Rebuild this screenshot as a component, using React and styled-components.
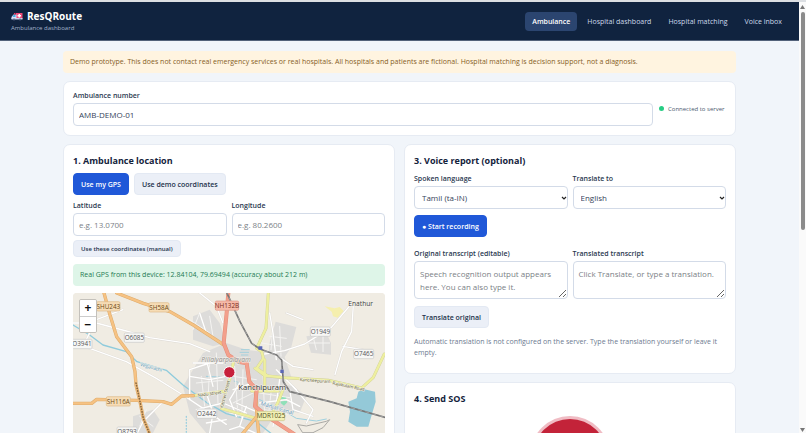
import React from 'react';
import styled, { createGlobalStyle, css } from 'styled-components';

const GlobalStyle = createGlobalStyle`
  *, *::before, *::after { box-sizing: border-box; }
  body {
    margin: 0;
    background: #f1f5fa;
    color: #14233c;
    font-family: "Open Sans", "Noto Sans", sans-serif;
    font-size: 7px;
    line-height: 10px;
  }
  button, input, select, textarea { font-family: inherit; margin: 0; }
  h1, h2, p { margin: 0; }
`;

const Shell = styled.div`
  display: flex;
  height: 100vh;
  overflow: hidden;
  border-top: 2px solid #dcdfe3;
`;

const Page = styled.div`
  flex: 1;
  min-width: 0;
`;

const ScrollTrack = styled.div`
  width: 7px;
  flex: none;
  display: flex;
  flex-direction: column;
  align-items: center;
  justify-content: space-between;
  gap: 3px;
  padding: 3px 0 1px;
  background: #fafafa;
`;

const ScrollThumb = styled.div`
  width: 4px;
  height: 51%;
  margin-bottom: auto;
  border-radius: 2px;
  background: #8b8b8b;
`;

const Header = styled.header`
  display: flex;
  align-items: center;
  justify-content: space-between;
  height: 39px;
  padding: 1px 10px 0 11px;
  background: #10233f;
  border-bottom: 1px solid #53627a;
`;

const Brand = styled.div`
  display: flex;
  flex-direction: column;
  gap: 1px;
`;

const BrandName = styled.h1`
  display: flex;
  align-items: center;
  gap: 4px;
  font-size: 10px;
  line-height: 13px;
  font-weight: 700;
  color: #fff;
`;

const BrandSub = styled.p`
  font-size: 6px;
  line-height: 9px;
  color: #a3b3cc;
`;

const Nav = styled.nav`
  display: flex;
  gap: 3px;
`;

const NavLink = styled.a`
  padding: 4px 7px;
  border-radius: 4px;
  line-height: 11px;
  text-decoration: none;
  color: ${(p) => (p.$active ? '#fff' : '#cdd9eb')};
  font-weight: ${(p) => (p.$active ? 600 : 400)};
  background: ${(p) => (p.$active ? '#2b4570' : 'transparent')};
`;

const Main = styled.main`
  display: flex;
  flex-direction: column;
  gap: 8px;
  max-width: 673px;
  margin: 0 auto;
  padding-top: 10px;
`;

const Notice = styled.p`
  padding: 6px 7px;
  border-radius: 4px;
  background: #fff4e0;
  color: #86601f;
`;

const Card = styled.section`
  padding: 9px;
  border: 1px solid #e6ebf3;
  border-radius: 7px;
  background: #fff;
`;

const TopCard = styled(Card)`
  display: flex;
  align-items: center;
  gap: 6px;
`;

const VoiceCard = styled(Card)`
  padding-bottom: 15px;
`;

const Columns = styled.div`
  display: grid;
  grid-template-columns: 1fr 1fr;
  align-items: start;
  gap: 9px;
`;

const Column = styled.div`
  display: flex;
  flex-direction: column;
  gap: 8px;
`;

const CardTitle = styled.h2`
  font-size: 9px;
  line-height: 14px;
  font-weight: 700;
`;

const Field = styled.div`
  display: flex;
  flex-direction: column;
  flex: 1;
  gap: 2px;
  min-width: 0;
`;

const FieldLabel = styled.label`
  font-weight: 600;
  line-height: 10px;
  color: #2a3850;
`;

const controlStyle = css`
  width: 100%;
  border: 1px solid #d3dbe8;
  border-radius: 4px;
  background: #fff;
  color: #36435a;
  font-size: 8px;
  &::placeholder { color: #7b7f86; opacity: 1; }
`;

const TextInput = styled.input`
  ${controlStyle}
  height: 23px;
  padding: 0 5px;
`;

const SelectBox = styled.select`
  ${controlStyle}
  height: 23px;
  padding: 0 7px;
  appearance: none;
`;

const SelectWrap = styled.div`
  position: relative;
  svg {
    position: absolute;
    right: 1px;
    top: 9px;
    pointer-events: none;
  }
`;

const TextArea = styled.textarea`
  ${controlStyle}
  display: block;
  height: 38px;
  padding: 5px;
  line-height: 13px;
  resize: vertical;
`;

const Row = styled.div`
  display: flex;
  gap: 5px;
  margin-top: ${(p) => p.$top}px;
`;

const Button = styled.button`
  height: ${(p) => (p.$small ? 17 : 22)}px;
  padding: 0 7px;
  border: 1px solid ${(p) => (p.$primary ? '#2058d8' : '#e3e9f3')};
  border-radius: 4px;
  background: ${(p) => (p.$primary ? '#2058d8' : '#ebeff7')};
  color: ${(p) => (p.$primary ? '#fff' : '#22314b')};
  font-size: ${(p) => (p.$small ? 6 : 7)}px;
  font-weight: 600;
  white-space: nowrap;
`;

const Status = styled.div`
  display: flex;
  align-items: center;
  gap: 4px;
  min-width: 67px;
  font-size: 6px;
  white-space: nowrap;
  color: #4c5a70;
`;

const StatusDot = styled.span`
  width: 5px;
  height: 5px;
  border-radius: 50%;
  background: #27cd84;
`;

const Success = styled.p`
  margin-top: 7px;
  padding: 6px 7px;
  border-radius: 4px;
  background: #def5e8;
  color: #237a52;
`;

const Hint = styled.p`
  margin-top: 8px;
  line-height: 11px;
  color: #6d7a90;
`;

const MapFrame = styled.div`
  position: relative;
  height: 200px;
  margin-top: 7px;
  border-radius: 4px;
  overflow: hidden;
  background: #f0ece3;
  svg { display: block; width: 100%; height: 100%; }
`;

const ZoomControl = styled.div`
  position: absolute;
  left: 6px;
  top: 6px;
  display: flex;
  flex-direction: column;
  border: 1px solid #c4c1bb;
  border-radius: 2px;
  overflow: hidden;
`;

const ZoomButton = styled.button`
  width: 16px;
  height: 16px;
  padding: 0;
  border: 0;
  background: #fff;
  color: #111;
  font-size: 12px;
  line-height: 14px;
  font-weight: 700;
  & + & { border-top: 1px solid #ccc; }
`;

const SosButton = styled.button`
  display: block;
  width: 74px;
  height: 74px;
  margin: 13px auto 10px;
  border: 0;
  border-radius: 50%;
  background: #c32339;
  box-shadow: 0 0 0 3px #f0bcc4;
`;

function AmbulanceIcon() {
  return (
    <svg width="12" height="9" viewBox="0 0 24 18" aria-hidden="true">
      <path d="M10 2h13v12H10z" fill="#ef4a78" />
      <path d="M5 5h6v9H1v-4z" fill="#d9e3f5" />
      <path d="M5 6h4v4H3z" fill="#4aa9e8" />
      <path d="M1 12h22v3H1z" fill="#c9d3ea" />
      <path d="M15 4h3v2h2v3h-2v2h-3V9h-2V6h2z" fill="#fff" />
      <circle cx="6" cy="15" r="2" fill="#5a6788" />
      <circle cx="18" cy="15" r="2" fill="#5a6788" />
      <path d="M6 2h3v3H6z" fill="#e5355e" />
    </svg>
  );
}

function Chevron() {
  return (
    <svg width="6" height="6" viewBox="0 0 6 6" aria-hidden="true">
      <path d="M1 2l2 2 2-2" fill="none" stroke="#222" strokeWidth="1.2" />
    </svg>
  );
}

function ScrollArrow({ down }) {
  return (
    <svg width="5" height="4" viewBox="0 0 5 4" aria-hidden="true">
      <path d={down ? 'M0 0h5L2.5 4z' : 'M0 4h5L2.5 0z'} fill="#777" />
    </svg>
  );
}

const BUILT_AREAS = [
  'M360 70l50-20 30 40 20 60-40 10-60-20z',
  'M390 180l70-30 60 20 70 10 50 60-10 90-60 90H400l-50-60-20-80z',
  'M608 86l62 16-15 60-20 30 20 60-40 10-30-50 4-60z',
  'M700 130l60-10 14 30v35l-60-6z',
  'M180 370l60-20 20 30-20 40h-60z',
  'M610 270l50 10 40 30-20 50-60-10z',
];

const LANES = [
  'M0 90l70 0 90 24 70 20 120 18 60 24',
  'M0 160l50 6 110 40 90 50 80 50 60 40 70 48',
  'M40 140l30-60 80-30',
  'M350 320v-90l60-20M360 210h90M380 60l20 60 50 30',
  'M270 326l-60 60-20 40',
  'M380 0l50 40 20 50M400 300l20 60-10 60M420 280l-20-80',
  'M350 250l60 10 50-10M370 350l80-20 70 30M400 390l60-10',
  'M575 183l60-10 60-20 80-50 60-70',
  'M841 35l-5 80-30 60-20 70M810 160l60 10M690 80l-50-20',
  'M590 60l10 60 10 80M600 180l60 40 60 10M610 230l60 60',
  'M500 270l-30 50 20 50M560 330l80-10 40 20M620 260l-20 140',
  'M650 290l10 60 60 20M480 290l60-20M490 330l70 30M500 400l20-60',
  'M660 280l60 70-20 40M470 410l30-10 70 30',
];

const STREETS = 'M385 250l10 90M410 210l-5 120M430 180l5 150M370 270l80-8M375 300l80-8M485 220l10 150M510 230l-4 150M540 300l-60 30M570 240l5 130M595 290l-10 90M480 250l70 10M470 360l90 20M560 300l90 14M575 350l70 14M600 100l-6 70M620 100l4 90M590 130l50 6M625 160l-70-12M350 80l60 40M380 60l-20 50M410 70l10 60M700 150h70M720 130l10 40M750 130v46M200 370l40 30M220 350l-20 50';

const STATE_ROADS = [
  'M93 0l18 66 20 65 45 60 10 45 3 40 12 50 10 50 22 54',
  'M131 0l80 31 80 25 70 40 92 60',
  'M0 331h56l15-12 119 3 80 4 26 8 30-25 35-1',
  'M548 300l4 70-50 60M552 370l6 60',
];

const YELLOW_ROADS = [
  'M361 308l97-14',
  'M482 205l-11 50-13 40-12 52 54 15 50 14',
  'M586 0l-7 106-28 60 15 10 5 20-20 30 32 22',
  'M546 226l30 22 60 6 130 8 100 23 35-32 33-70',
  'M575 200v90M530 260l6 34h80M630 290l-16 40-16 30',
];

const TRUNK_ROADS = [
  'M466 0l-6 70-8 80 14 36 30 20 25 5 8 55 22 24-5 50 44 35 76 50',
];

const RAIL = 'M459-6l42 92 35 65 25 17 50 18 15 15 5 65 20 30 120 30 168 48';

const SHIELDS = [
  { x: 106, y: 40, w: 70, t: 'SHU243', f: '#f6dcb5', s: '#dcb988', c: '#6d4a14' },
  { x: 258, y: 43, w: 60, t: 'SH58A', f: '#f6dcb5', s: '#dcb988', c: '#6d4a14' },
  { x: 462, y: 38, w: 70, t: 'NH132B', f: '#f6b9a8', s: '#dc9887', c: '#7a2b1b' },
  { x: 136, y: 325, w: 72, t: 'SH116A', f: '#f6dcb5', s: '#dcb988', c: '#6d4a14' },
  { x: 184, y: 134, w: 60, t: 'O6085', f: '#f7f7f5', s: '#c8c8c8', c: '#555' },
  { x: 27, y: 153, w: 60, t: 'O3941', f: '#f7f7f5', s: '#c8c8c8', c: '#555' },
  { x: 401, y: 362, w: 60, t: 'O2442', f: '#f7f7f5', s: '#c8c8c8', c: '#555' },
  { x: 162, y: 416, w: 60, t: 'O8793', f: '#f7f7f5', s: '#c8c8c8', c: '#555' },
  { x: 742, y: 116, w: 60, t: 'O1949', f: '#f7f7f5', s: '#c8c8c8', c: '#555' },
  { x: 872, y: 183, w: 60, t: 'O7465', f: '#f7f7f5', s: '#c8c8c8', c: '#555' },
  { x: 594, y: 369, w: 82, t: 'MDR1025', f: '#f2f0b4', s: '#c8c48a', c: '#55531f' },
];

function RoadMap() {
  return (
    <svg viewBox="0 0 939 600" preserveAspectRatio="xMinYMin slice" role="img" aria-label="Map of Kanchipuram">
      <rect width="939" height="600" fill="#f0ece3" />
      {BUILT_AREAS.map((d) => <path key={d} d={d} fill="#dddcda" />)}
      <path d="M755 40l30 6 15-4 12 12-18 20-14-4-4-14z" fill="#f5efae" />
      <path d="M625 310l14 2 4 16-10 10-10-8z" fill="#8fe0b8" />
      <path d="M856 296l15-8 35 8 2 30-12 40-10 35h-35l-25-15 5-30-5-30 25-10z" fill="#94c9d8" />
      <path d="M504 170h26M500 178h28M504 186h22M482 264l14 4M490 272l10 4" stroke="#a4d0dc" strokeWidth="3" />
      <g fill="none" strokeLinejoin="round" strokeLinecap="round">
        <path d="M0 96l50 30 40 30 70 20 32 30 88 26 50 44 70 52 60 34 90 24 50 40" stroke="#8fcbdc" strokeWidth="4" />
        <path d="M560 320l60 26 50 30 60 8 30-6M400 250l80 4" stroke="#9fd0df" strokeWidth="3" />
        <path d="M340 370v60" stroke="#9fd0df" strokeWidth="4" strokeDasharray="3 6" />
        <path d="M675 395l25 4 60-14 10-5-20 24-30 15h-30z" stroke="#aaa9a5" strokeWidth="3" />
        <path d={STREETS} stroke="#f4f3f1" strokeWidth="3" />
        {LANES.map((d) => <path key={d} d={d} stroke="#dcd9d4" strokeWidth="6" />)}
        {LANES.map((d) => <path key={d} d={d} stroke="#fff" strokeWidth="4" />)}
        {YELLOW_ROADS.map((d) => <path key={d} d={d} stroke="#cfcf98" strokeWidth="9" />)}
        {YELLOW_ROADS.map((d) => <path key={d} d={d} stroke="#eeef9f" strokeWidth="7" />)}
        {STATE_ROADS.map((d) => <path key={d} d={d} stroke="#deac6c" strokeWidth="10" />)}
        {STATE_ROADS.map((d) => <path key={d} d={d} stroke="#f6c283" strokeWidth="7" />)}
        {TRUNK_ROADS.map((d) => <path key={d} d={d} stroke="#e38d7a" strokeWidth="12" />)}
        {TRUNK_ROADS.map((d) => <path key={d} d={d} stroke="#f3a08c" strokeWidth="9" />)}
        <path d="M189 270l12 56 10 50 22 54" stroke="#8a673c" strokeWidth="5" strokeDasharray="1 7" />
        <path d={RAIL} stroke="#777" strokeWidth="5" />
        <path d={RAIL} stroke="#b5b5b5" strokeWidth="2" strokeDasharray="10 12" />
      </g>
      <path d="M556 160h12v10h-12zM622 230h10v10h-10z" fill="#5a68b8" />
      {SHIELDS.map((r) => (
        <g key={r.t}>
          <rect x={r.x - r.w / 2} y={r.y - 14} width={r.w} height="28" rx="4" fill={r.f} stroke={r.s} strokeWidth="2" />
          <text x={r.x} y={r.y + 7} fontSize="19" textAnchor="middle" fill={r.c}>{r.t}</text>
        </g>
      ))}
      <g fontSize="20" stroke="#f4f1ea" strokeWidth="3" paintOrder="stroke">
        <text x="826" y="38" fill="#444">Enathur</text>
        <text x="385" y="207" fill="#8a8a8a" fontStyle="italic">Pillaiyarpalayam</text>
        <text x="496" y="291" fontSize="23" fill="#333">Kanchipuram</text>
        <text x="200" y="218" fontSize="15" fill="#5b9dc0" transform="rotate(16 200 218)">Vegavathi</text>
        <text x="562" y="336" fontSize="17" fill="#5b94c0" transform="rotate(17 562 336)">Manjal Canal</text>
        <text x="680" y="264" fontSize="13" fill="#55531f" transform="rotate(4 680 264)">Kancheepuram</text>
        <text x="778" y="274" fontSize="13" fill="#55531f" transform="rotate(12 778 274)">Rajakulam Road</text>
        <text x="374" y="311" fontSize="13" fill="#55531f" transform="rotate(-7 374 311)">Nadu Street</text>
        <text x="450" y="346" fontSize="13" fill="#55531f" transform="rotate(-76 450 346)">Kitchen Street</text>
      </g>
      <circle cx="469" cy="238" r="17" fill="#c7213b" stroke="#fff" strokeWidth="3" />
    </svg>
  );
}

function SelectField({ id, label, value }) {
  return (
    <Field>
      <FieldLabel htmlFor={id}>{label}</FieldLabel>
      <SelectWrap>
        <SelectBox id={id} defaultValue={value}>
          <option>{value}</option>
        </SelectBox>
        <Chevron />
      </SelectWrap>
    </Field>
  );
}

function InputField({ id, label, ...rest }) {
  return (
    <Field>
      <FieldLabel htmlFor={id}>{label}</FieldLabel>
      <TextInput id={id} {...rest} />
    </Field>
  );
}

function AreaField({ id, label, placeholder }) {
  return (
    <Field>
      <FieldLabel htmlFor={id}>{label}</FieldLabel>
      <TextArea id={id} placeholder={placeholder} />
    </Field>
  );
}

export default function App() {
  return (
    <>
      <GlobalStyle />
      <Shell>
        <Page>
          <Header>
            <Brand>
              <BrandName><AmbulanceIcon />ResQRoute</BrandName>
              <BrandSub>Ambulance dashboard</BrandSub>
            </Brand>
            <Nav>
              <NavLink href="#ambulance" $active aria-current="page">Ambulance</NavLink>
              <NavLink href="#hospital">Hospital dashboard</NavLink>
              <NavLink href="#matching">Hospital matching</NavLink>
              <NavLink href="#voice">Voice inbox</NavLink>
            </Nav>
          </Header>
          <Main>
            <Notice>
              Demo prototype. This does not contact real emergency services or real hospitals. All hospitals and
              patients are fictional. Hospital matching is decision support, not a diagnosis.
            </Notice>
            <TopCard>
              <InputField id="number" label="Ambulance number" defaultValue="AMB-DEMO-01" />
              <Status><StatusDot />Connected to server</Status>
            </TopCard>
            <Columns>
              <Card>
                <CardTitle>1. Ambulance location</CardTitle>
                <Row $top={5}>
                  <Button $primary>Use my GPS</Button>
                  <Button>Use demo coordinates</Button>
                </Row>
                <Row $top={6}>
                  <InputField id="lat" label="Latitude" placeholder="e.g. 13.0700" />
                  <InputField id="lng" label="Longitude" placeholder="e.g. 80.2600" />
                </Row>
                <Row $top={4}>
                  <Button $small>Use these coordinates (manual)</Button>
                </Row>
                <Success>Real GPS from this device: 12.84104, 79.69494 (accuracy about 212 m)</Success>
                <MapFrame>
                  <RoadMap />
                  <ZoomControl>
                    <ZoomButton aria-label="Zoom in">+</ZoomButton>
                    <ZoomButton aria-label="Zoom out">−</ZoomButton>
                  </ZoomControl>
                </MapFrame>
              </Card>
              <Column>
                <VoiceCard>
                  <CardTitle>3. Voice report (optional)</CardTitle>
                  <Row $top={6}>
                    <SelectField id="spoken" label="Spoken language" value="Tamil (ta-IN)" />
                    <SelectField id="target" label="Translate to" value="English" />
                  </Row>
                  <Row $top={6}>
                    <Button $primary>● Start recording</Button>
                  </Row>
                  <Row $top={12}>
                    <AreaField
                      id="original"
                      label="Original transcript (editable)"
                      placeholder="Speech recognition output appears here. You can also type it."
                    />
                    <AreaField
                      id="translated"
                      label="Translated transcript"
                      placeholder="Click Translate, or type a translation."
                    />
                  </Row>
                  <Row $top={7}>
                    <Button>Translate original</Button>
                  </Row>
                  <Hint>
                    Automatic translation is not configured on the server. Type the translation yourself or leave it
                    empty.
                  </Hint>
                </VoiceCard>
                <Card>
                  <CardTitle>4. Send SOS</CardTitle>
                  <SosButton aria-label="Send SOS" />
                </Card>
              </Column>
            </Columns>
          </Main>
        </Page>
        <ScrollTrack aria-hidden="true">
          <ScrollArrow />
          <ScrollThumb />
          <ScrollArrow down />
        </ScrollTrack>
      </Shell>
    </>
  );
}
